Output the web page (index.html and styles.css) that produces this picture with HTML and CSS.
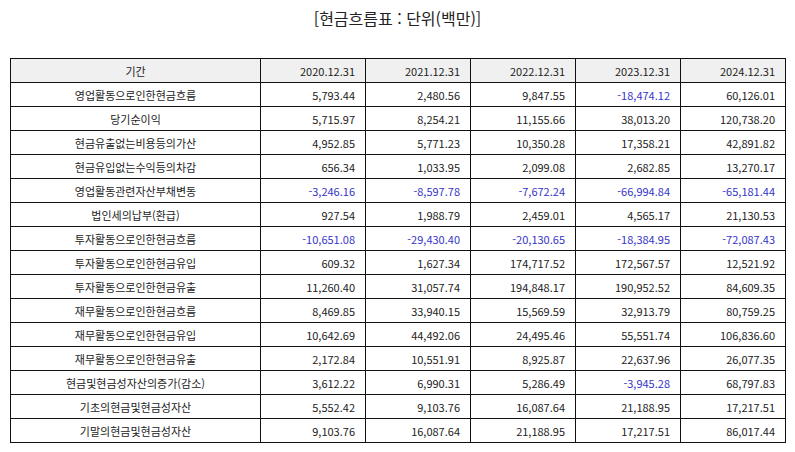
FILE: index.html
```html
<!DOCTYPE html>
<html lang="ko">
<head>
<meta charset="utf-8">
<title>현금흐름표</title>
<link rel="stylesheet" href="styles.css">
</head>
<body>
<div class="page">
  <div class="title">[현금흐름표 : 단위(백만)]</div>
  <table class="cf">
    <colgroup>
      <col class="c-label"><col class="c-num"><col class="c-num"><col class="c-num"><col class="c-num"><col class="c-num">
    </colgroup>
    <thead>
      <tr><th class="lbl">기간</th><th>2020.12.31</th><th>2021.12.31</th><th>2022.12.31</th><th>2023.12.31</th><th>2024.12.31</th></tr>
    </thead>
    <tbody>
      <tr><td class="lbl">영업활동으로인한현금흐름</td><td>5,793.44</td><td>2,480.56</td><td>9,847.55</td><td class="neg">-18,474.12</td><td>60,126.01</td></tr>
      <tr><td class="lbl">당기순이익</td><td>5,715.97</td><td>8,254.21</td><td>11,155.66</td><td>38,013.20</td><td>120,738.20</td></tr>
      <tr><td class="lbl">현금유출없는비용등의가산</td><td>4,952.85</td><td>5,771.23</td><td>10,350.28</td><td>17,358.21</td><td>42,891.82</td></tr>
      <tr><td class="lbl">현금유입없는수익등의차감</td><td>656.34</td><td>1,033.95</td><td>2,099.08</td><td>2,682.85</td><td>13,270.17</td></tr>
      <tr><td class="lbl">영업활동관련자산부채변동</td><td class="neg">-3,246.16</td><td class="neg">-8,597.78</td><td class="neg">-7,672.24</td><td class="neg">-66,994.84</td><td class="neg">-65,181.44</td></tr>
      <tr><td class="lbl">법인세의납부(환급)</td><td>927.54</td><td>1,988.79</td><td>2,459.01</td><td>4,565.17</td><td>21,130.53</td></tr>
      <tr><td class="lbl">투자활동으로인한현금흐름</td><td class="neg">-10,651.08</td><td class="neg">-29,430.40</td><td class="neg">-20,130.65</td><td class="neg">-18,384.95</td><td class="neg">-72,087.43</td></tr>
      <tr><td class="lbl">투자활동으로인한현금유입</td><td>609.32</td><td>1,627.34</td><td>174,717.52</td><td>172,567.57</td><td>12,521.92</td></tr>
      <tr><td class="lbl">투자활동으로인한현금유출</td><td>11,260.40</td><td>31,057.74</td><td>194,848.17</td><td>190,952.52</td><td>84,609.35</td></tr>
      <tr><td class="lbl">재무활동으로인한현금흐름</td><td>8,469.85</td><td>33,940.15</td><td>15,569.59</td><td>32,913.79</td><td>80,759.25</td></tr>
      <tr><td class="lbl">재무활동으로인한현금유입</td><td>10,642.69</td><td>44,492.06</td><td>24,495.46</td><td>55,551.74</td><td>106,836.60</td></tr>
      <tr><td class="lbl">재무활동으로인한현금유출</td><td>2,172.84</td><td>10,551.91</td><td>8,925.87</td><td>22,637.96</td><td>26,077.35</td></tr>
      <tr><td class="lbl">현금및현금성자산의증가(감소)</td><td>3,612.22</td><td>6,990.31</td><td>5,286.49</td><td class="neg">-3,945.28</td><td>68,797.83</td></tr>
      <tr><td class="lbl">기초의현금및현금성자산</td><td>5,552.42</td><td>9,103.76</td><td>16,087.64</td><td>21,188.95</td><td>17,217.51</td></tr>
      <tr><td class="lbl">기말의현금및현금성자산</td><td>9,103.76</td><td>16,087.64</td><td>21,188.95</td><td>17,217.51</td><td>86,017.44</td></tr>
    </tbody>
  </table>
</div>
</body>
</html>
```

FILE: styles.css
```css
html, body {
  margin: 0;
  padding: 0;
  background: #ffffff;
}

.page {
  padding: 0 10px;
  font-family: "Noto Sans CJK KR", "Noto Sans", sans-serif;
  color: #222222;
}

.title {
  height: 37px;
  line-height: 36px;
  text-align: center;
  font-size: 16px;
  color: #222222;
  margin-bottom: 21px;
}

.cf {
  border-collapse: collapse;
  width: 776px;
  table-layout: fixed;
  font-size: 11px;
}

.c-label { width: 250px; }
.c-num { width: 105px; }

.cf th,
.cf td {
  border: 1px solid #111111;
  height: 23px;
  padding: 0 10px;
  text-align: right;
  font-weight: normal;
  line-height: 14px;
  white-space: nowrap;
  color: #222222;
}

.cf thead th {
  background: #f0f0f0;
}

.cf .lbl {
  text-align: center;
}

.cf .neg {
  color: #3434c8;
}
```
